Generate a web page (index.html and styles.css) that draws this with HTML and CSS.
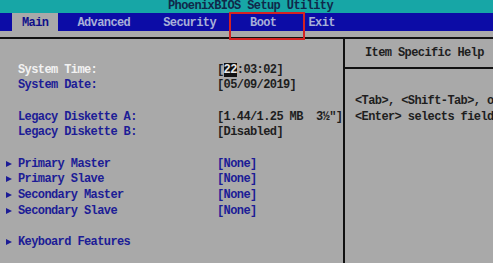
FILE: index.html
```html
<!DOCTYPE html>
<html lang="en">
<head>
    <meta charset="UTF-8">
    <title>PhoenixBIOS Setup Utility</title>
    <link rel="stylesheet" href="styles.css">
</head>
<body>
    <div class="screen">
        <div class="title">PhoenixBIOS Setup Utility</div>
        <div class="menu">
            <span class="tab active">Main</span>
            <span class="tab">Advanced</span>
            <span class="tab">Security</span>
            <span class="tab">Boot</span>
            <span class="tab">Exit</span>
        </div>
        <div class="strip"></div>

        <div class="body">
            <div class="items">
                <div class="row"><span class="label current">System Time:</span><span class="value">[<span class="cursor">22</span>:03:02]</span></div>
                <div class="row"><span class="label">System Date:</span><span class="value">[05/09/2019]</span></div>
                <div class="row"></div>
                <div class="row"><span class="label">Legacy Diskette A:</span><span class="value">[1.44/1.25 MB  3½"]</span></div>
                <div class="row"><span class="label">Legacy Diskette B:</span><span class="value">[Disabled]</span></div>
                <div class="row"></div>
                <div class="row sub"><span class="label">Primary Master</span><span class="value link">[None]</span></div>
                <div class="row sub"><span class="label">Primary Slave</span><span class="value link">[None]</span></div>
                <div class="row sub"><span class="label">Secondary Master</span><span class="value link">[None]</span></div>
                <div class="row sub"><span class="label">Secondary Slave</span><span class="value link">[None]</span></div>
                <div class="row"></div>
                <div class="row sub"><span class="label">Keyboard Features</span></div>
            </div>
            <div class="help">
                <div class="help-title">Item Specific Help</div>
                <div class="help-text">
                    <div>&lt;Tab&gt;, &lt;Shift-Tab&gt;, or</div>
                    <div>&lt;Enter&gt; selects field.</div>
                </div>
            </div>
        </div>

        <!-- annotation box around Boot -->
        <div class="mark"></div>
    </div>
</body>
</html>
```

FILE: styles.css
```css
body {
    margin: 0;
    padding: 0;
    background: #a9a9a9;
    font-family: "Liberation Mono", "DejaVu Sans Mono", monospace;
    font-size: 12px;
    letter-spacing: -0.6px;
    font-weight: bold;
}

.screen {
    position: relative;
    width: 493px;
    height: 263px;
    overflow: hidden;
    display: flex;
    flex-direction: column;
}

.title {
    height: 13px;
    line-height: 12px;
    background: #17a6a6;
    color: #10284a;
    text-align: center;
    padding-left: 8px;
}

.menu {
    height: 18px;
    background: #0c0ca6;
    color: #a8b0d8;
    display: flex;
    align-items: stretch;
    padding-left: 12px;
}

.tab {
    display: flex;
    align-items: center;
    padding: 1px 10px 0;
}

.tab.active {
    background: #a9a9a9;
    color: #10108a;
}

.tab:nth-child(1) { margin-right: 9px; }
.tab:nth-child(2) { margin-right: 13px; }
.tab:nth-child(3) { margin-right: 14px; }
.tab:nth-child(4) { margin-right: 12px; }

.strip {
    height: 6px;
    border-bottom: 2px solid #111;
}

.body {
    flex: 1;
    display: flex;
}

.items {
    width: 343px;
    border-right: 2px solid #111;
    padding-top: 23.5px;
}

.row {
    height: 15.7px;
    line-height: 15.7px;
    display: flex;
    white-space: pre;
}

.label {
    width: 199px;
    padding-left: 18px;
    color: #1c1c96;
}

.label.current {
    color: #f2f2f2;
}

.sub .label {
    position: relative;
}

.sub .label::before {
    content: "";
    position: absolute;
    left: 6px;
    top: 4px;
    border-left: 6px solid #1c1c96;
    border-top: 3.5px solid transparent;
    border-bottom: 3.5px solid transparent;
}

.value {
    color: #1e1e1e;
}

.value.link {
    color: #1c1c96;
}

.cursor {
    background: #111;
    color: #e8e8e8;
}

.help {
    flex: 1;
    color: #1e1e1e;
    white-space: nowrap;
    overflow: hidden;
}

.help-title {
    height: 28px;
    line-height: 28px;
    border-bottom: 2px solid #111;
    padding-left: 20px;
}

.help-text {
    padding-top: 24px;
    padding-left: 10px;
    line-height: 16px;
}

.mark {
    position: absolute;
    left: 229px;
    top: 12px;
    width: 72px;
    height: 24px;
    border: 2px solid #d42222;
}
```
